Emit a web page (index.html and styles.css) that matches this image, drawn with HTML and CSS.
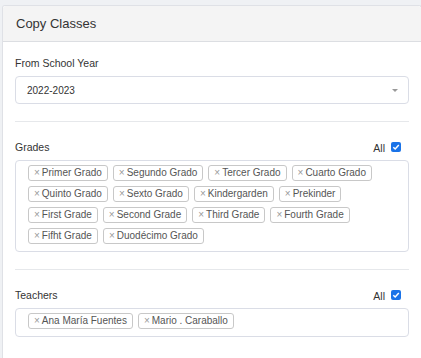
FILE: index.html
```html
<!DOCTYPE html>
<html lang="en">
<head>
    <meta charset="UTF-8">
    <meta name="viewport" content="width=device-width, initial-scale=1.0">
    <title>Copy Classes</title>
    <link rel="stylesheet" href="styles.css">
</head>
<body>
    <div class="card">
        <div class="card-header">Copy Classes</div>
        <div class="card-body">
            <div class="field">
                <label class="field-label">From School Year</label>
                <div class="select">
                    <span>2022-2023</span>
                    <span class="caret"></span>
                </div>
            </div>

            <hr>

            <div class="field">
                <div class="field-row">
                    <label class="field-label">Grades</label>
                    <label class="all">All <span class="check"><svg viewBox="0 0 10 10"><path d="M2.3 5.2 L4.2 7 L7.8 3" fill="none" stroke="#fff" stroke-width="1.5"/></svg></span></label>
                </div>
                <div class="tags">
                    <span class="tag"><span class="x">×</span>Primer Grado</span>
                    <span class="tag"><span class="x">×</span>Segundo Grado</span>
                    <span class="tag"><span class="x">×</span>Tercer Grado</span>
                    <span class="tag"><span class="x">×</span>Cuarto Grado</span>
                    <span class="tag"><span class="x">×</span>Quinto Grado</span>
                    <span class="tag"><span class="x">×</span>Sexto Grado</span>
                    <span class="tag"><span class="x">×</span>Kindergarden</span>
                    <span class="tag"><span class="x">×</span>Prekinder</span>
                    <span class="tag"><span class="x">×</span>First Grade</span>
                    <span class="tag"><span class="x">×</span>Second Grade</span>
                    <span class="tag"><span class="x">×</span>Third Grade</span>
                    <span class="tag"><span class="x">×</span>Fourth Grade</span>
                    <span class="tag"><span class="x">×</span>Fifht Grade</span>
                    <span class="tag"><span class="x">×</span>Duodécimo Grado</span>
                </div>
            </div>

            <hr>

            <div class="field">
                <div class="field-row">
                    <label class="field-label">Teachers</label>
                    <label class="all">All <span class="check"><svg viewBox="0 0 10 10"><path d="M2.3 5.2 L4.2 7 L7.8 3" fill="none" stroke="#fff" stroke-width="1.5"/></svg></span></label>
                </div>
                <div class="tags">
                    <span class="tag"><span class="x">×</span>Ana María Fuentes</span>
                    <span class="tag"><span class="x">×</span>Mario . Caraballo</span>
                </div>
            </div>
        </div>
    </div>
</body>
</html>
```

FILE: styles.css
```css
body {
    margin: 0;
    padding: 5px 0 0 2px;
    background: #eff1f4;
    font-family: "Liberation Sans", Arial, sans-serif;
    color: #333;
}
.card {
    width: 418px;
    height: 352px;
    background: #fff;
    border: 1px solid #dfe1e6;
    border-bottom: none;
    border-radius: 3px 3px 0 0;
}
.card-header {
    height: 35px;
    line-height: 35px;
    padding-left: 13px;
    font-size: 13px;
    background: #f4f4f4;
    border-bottom: 1px solid #dcdee2;
    border-radius: 3px 3px 0 0;
}
.card-body {
    padding: 15px 12px 0 12px;
}
.field-label {
    display: block;
    font-size: 10.5px;
    line-height: 13px;
}
.field-row {
    display: flex;
    justify-content: space-between;
    align-items: center;
    height: 13px;
    margin-bottom: 6px;
}
.field > .field-label {
    margin-bottom: 6px;
}
.select {
    height: 26px;
    border: 1px solid #dadde6;
    border-radius: 4px;
    padding: 0 10px 0 11px;
    display: flex;
    align-items: center;
    justify-content: space-between;
    font-size: 10px;
}
.caret {
    width: 0;
    height: 0;
    border-left: 3px solid transparent;
    border-right: 3px solid transparent;
    border-top: 3px solid #999;
}
hr {
    border: none;
    border-top: 1px solid #e6e8eb;
    margin: 17px 0 19px 0;
}
.all {
    display: flex;
    align-items: center;
    font-size: 10.5px;
    margin-right: 8px;
}
.check {
    display: inline-block;
    width: 10px;
    height: 10px;
    margin-left: 6px;
    margin-top: -2px;
    background: #1a73e8;
    border-radius: 2px;
}
.check svg {
    display: block;
    width: 10px;
    height: 10px;
}
.tags {
    display: flex;
    flex-wrap: wrap;
    border: 1px solid #dadde6;
    border-radius: 4px;
    padding: 4px 12px 2px 12px;
}
.tag {
    height: 14px;
    line-height: 14px;
    padding: 0 5px;
    margin: 0 5px 5px 0;
    border: 1px solid #c8c8c8;
    border-radius: 3px;
    font-size: 10px;
    color: #555;
    white-space: nowrap;
}
.x {
    color: #999;
    margin-right: 2px;
}
```
